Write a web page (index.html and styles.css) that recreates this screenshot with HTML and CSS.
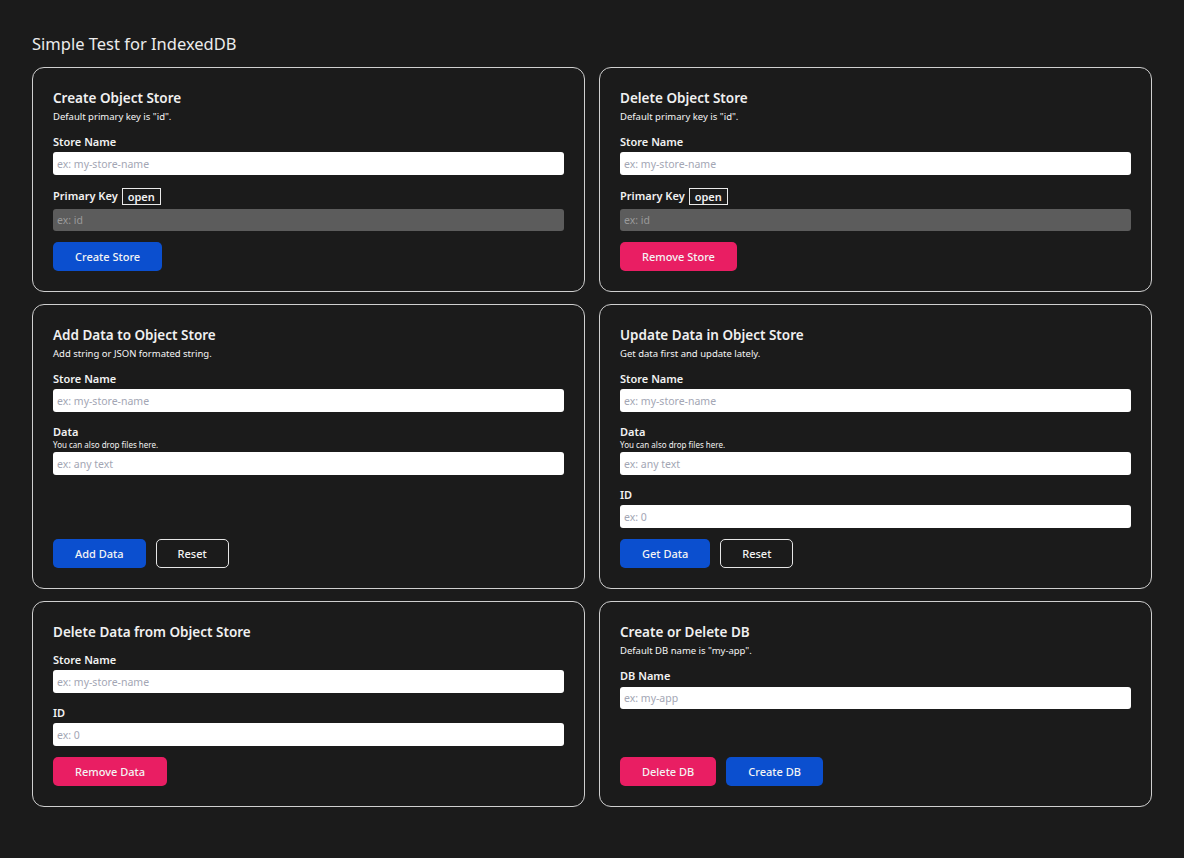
FILE: index.html
```html
<!DOCTYPE html>
<html lang="en">
<head>
<meta charset="utf-8">
<title>Simple Test for IndexedDB</title>
<link rel="stylesheet" href="styles.css">
</head>
<body>
<h1 class="page-title">Simple Test for IndexedDB</h1>
<main class="grid">
  <section class="card">
    <header class="card-head">
      <h2 class="card-title">Create Object Store</h2>
      <p class="card-desc">Default primary key is "id".</p>
    </header>
    <div class="field">
      <label class="label">Store Name</label>
      <input class="input" placeholder="ex: my-store-name">
    </div>
    <div class="field">
      <label class="label label-toggle">Primary Key <span class="toggle">open</span></label>
      <input class="input input-short" placeholder="ex: id" disabled>
    </div>
    <div class="actions">
      <button class="btn btn-blue">Create Store</button>
    </div>
  </section>

  <section class="card">
    <header class="card-head">
      <h2 class="card-title">Delete Object Store</h2>
      <p class="card-desc">Default primary key is "id".</p>
    </header>
    <div class="field">
      <label class="label">Store Name</label>
      <input class="input" placeholder="ex: my-store-name">
    </div>
    <div class="field">
      <label class="label label-toggle">Primary Key <span class="toggle">open</span></label>
      <input class="input input-short" placeholder="ex: id" disabled>
    </div>
    <div class="actions">
      <button class="btn btn-pink">Remove Store</button>
    </div>
  </section>

  <section class="card">
    <header class="card-head">
      <h2 class="card-title">Add Data to Object Store</h2>
      <p class="card-desc">Add string or JSON formated string.</p>
    </header>
    <div class="field">
      <label class="label">Store Name</label>
      <input class="input" placeholder="ex: my-store-name">
    </div>
    <div class="field">
      <label class="label">Data</label>
      <span class="hint">You can also drop files here.</span>
      <input class="input" placeholder="ex: any text">
    </div>
    <div class="actions">
      <button class="btn btn-blue">Add Data</button>
      <button class="btn btn-outline">Reset</button>
    </div>
  </section>

  <section class="card">
    <header class="card-head">
      <h2 class="card-title">Update Data in Object Store</h2>
      <p class="card-desc">Get data first and update lately.</p>
    </header>
    <div class="field">
      <label class="label">Store Name</label>
      <input class="input" placeholder="ex: my-store-name">
    </div>
    <div class="field">
      <label class="label">Data</label>
      <span class="hint">You can also drop files here.</span>
      <input class="input" placeholder="ex: any text">
    </div>
    <div class="field">
      <label class="label">ID</label>
      <input class="input" placeholder="ex: 0">
    </div>
    <div class="actions">
      <button class="btn btn-blue">Get Data</button>
      <button class="btn btn-outline">Reset</button>
    </div>
  </section>

  <section class="card">
    <header class="card-head">
      <h2 class="card-title">Delete Data from Object Store</h2>
    </header>
    <div class="field">
      <label class="label">Store Name</label>
      <input class="input" placeholder="ex: my-store-name">
    </div>
    <div class="field">
      <label class="label">ID</label>
      <input class="input" placeholder="ex: 0">
    </div>
    <div class="actions">
      <button class="btn btn-pink">Remove Data</button>
    </div>
  </section>

  <section class="card">
    <header class="card-head">
      <h2 class="card-title">Create or Delete DB</h2>
      <p class="card-desc">Default DB name is "my-app".</p>
    </header>
    <div class="field">
      <label class="label">DB Name</label>
      <input class="input input-db" placeholder="ex: my-app">
    </div>
    <div class="actions">
      <button class="btn btn-pink">Delete DB</button>
      <button class="btn btn-blue">Create DB</button>
    </div>
  </section>
</main>
</body>
</html>
```

FILE: styles.css
```css
* { box-sizing: border-box; }

html, body {
  background: #1b1b1b;
}

body {
  margin: 0;
  padding: 32px;
  color: #f2f2f2;
  font-family: "Noto Sans", "Open Sans", sans-serif;
}

.page-title {
  margin: 0 0 11px;
  font-size: 16.5px;
  line-height: 24px;
  font-weight: 400;
  color: #ececec;
}

.grid {
  display: grid;
  grid-template-columns: 553px 553px;
  gap: 12px 14px;
}

.card {
  display: flex;
  flex-direction: column;
  border: 1px solid #cfcfcf;
  border-radius: 12px;
  padding: 20px;
}

.card-head {
  margin-bottom: 10px;
}

.card-title {
  margin: 0;
  font-size: 13.5px;
  line-height: 20px;
  font-weight: 600;
  color: #f0f0f0;
}

.card-desc {
  margin: 2px 0 0;
  font-size: 9.5px;
  line-height: 14px;
  color: #f5f5f5;
}

.field {
  display: flex;
  flex-direction: column;
  margin-bottom: 11px;
}

.field + .field {
  margin-top: 1px;
}

.label {
  font-size: 11px;
  line-height: 16px;
  font-weight: 600;
  color: #f2f2f2;
}

.label-toggle {
  display: flex;
  align-items: center;
  gap: 4px;
  height: 18px;
  margin-bottom: 2px;
}

.toggle {
  display: inline-block;
  border: 1px solid #eaeaea;
  padding: 0 5px;
  line-height: 15px;
  font-size: 11px;
  font-weight: 600;
}

.hint {
  font-size: 8px;
  line-height: 10px;
  color: #f2f2f2;
}

.input {
  margin-top: 2px;
  height: 23px;
  width: 100%;
  border: none;
  border-radius: 3px;
  background: #ffffff;
  padding: 0 4px;
  font-family: inherit;
  font-size: 10.5px;
  color: #222;
  outline: none;
}

.input-short {
  height: 22px;
}

.input-db {
  margin-top: 3px;
  height: 22px;
}

.input::placeholder {
  color: #a3a6b4;
}

.input:disabled {
  background: #5c5c5c;
}

.input:disabled::placeholder {
  color: #9a9a9a;
}

.actions {
  margin-top: auto;
  display: flex;
  gap: 10px;
}

.btn {
  height: 29px;
  padding: 0 21px;
  border-radius: 5px;
  border: 1px solid transparent;
  font-family: inherit;
  font-size: 11px;
  font-weight: 500;
  color: #f4f4f4;
  cursor: pointer;
}

.btn-blue {
  background: #0b4fcf;
}

.btn-pink {
  background: #e91e63;
}

.btn-outline {
  background: transparent;
  border-color: #e6e6e6;
}
```
